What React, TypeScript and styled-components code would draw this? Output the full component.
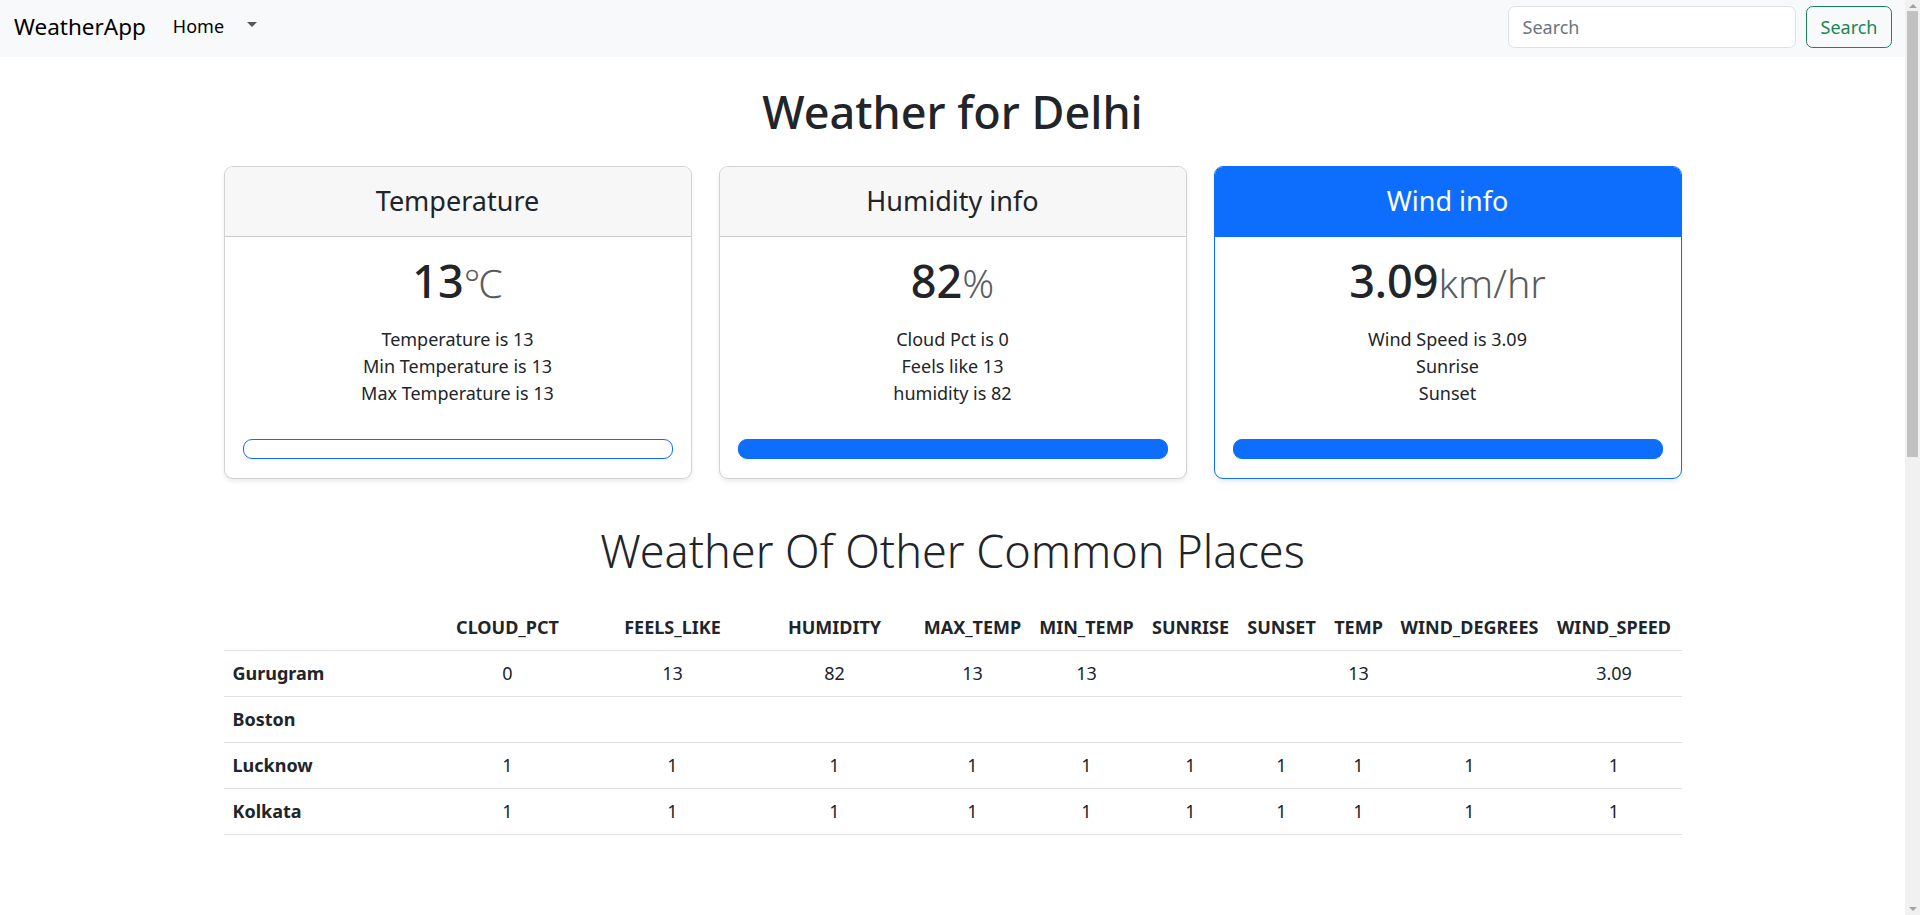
import React from "react";
import styled, { createGlobalStyle } from "styled-components";

const GlobalStyle = createGlobalStyle`
  *, *::before, *::after { box-sizing: border-box; }
  body {
    margin: 0;
    font-family: "Noto Sans", "Open Sans", sans-serif;
    font-size: 18px;
    line-height: 1.5;
    color: #212529;
    background: #fff;
  }
`;

const Page = styled.div`
  min-height: 1824px;
  padding-right: 15px;
`;

/* replica of the classic browser scrollbar visible on the right edge */
const ScrollBar = styled.div`
  position: fixed;
  top: 0;
  right: 0;
  width: 15px;
  height: 100vh;
  background: #f1f1f1;
  display: flex;
  flex-direction: column;
  align-items: center;
`;

const ScrollArrow = styled.span<{ $down?: boolean }>`
  width: 0;
  height: 0;
  margin: ${(p) => (p.$down ? "auto 0 4px" : "4px 0 0")};
  border-left: 4px solid transparent;
  border-right: 4px solid transparent;
  ${(p) =>
    p.$down ? "border-top: 4px solid #a3a3a3;" : "border-bottom: 4px solid #a3a3a3;"}
`;

const ScrollThumb = styled.span`
  width: 11px;
  height: 446px;
  margin-top: 3px;
  background: #c1c1c1;
`;

const Navbar = styled.nav`
  height: 57px;
  background: #f8f9fa;
  display: flex;
  align-items: center;
  justify-content: space-between;
  padding: 0 13px 3px 14px;
`;

const NavLeft = styled.div`
  display: flex;
  align-items: center;
`;

const Brand = styled.a`
  font-size: 22.5px;
  line-height: 1.5;
  color: #000;
  text-decoration: none;
  margin-right: 27px;
`;

const NavLink = styled.a`
  font-size: 18px;
  color: #000;
  text-decoration: none;
  margin-bottom: 2px;
`;

const Caret = styled.span`
  display: inline-block;
  margin-left: 23px;
  margin-top: -5px;
  width: 0;
  height: 0;
  border-top: 5.4px solid rgba(0, 0, 0, 0.65);
  border-left: 5.4px solid transparent;
  border-right: 5.4px solid transparent;
`;

const SearchForm = styled.form`
  display: flex;
  align-items: center;
  gap: 10px;
`;

const SearchInput = styled.input`
  width: 288px;
  height: 42.75px;
  padding: 6.75px 13.5px;
  font-family: inherit;
  font-size: 18px;
  color: #212529;
  background: #fff;
  border: 1px solid #dee2e6;
  border-radius: 6.75px;
  outline: none;
  &::placeholder { color: #6c757d; }
`;

const SearchButton = styled.button`
  height: 42.75px;
  width: 86px;
  padding: 0;
  font-family: inherit;
  font-size: 18px;
  color: #198754;
  background: transparent;
  border: 1px solid #198754;
  border-radius: 6.75px;
`;

const Main = styled.main`
  width: 1458px;
  margin: 0 auto;
`;

const PageTitle = styled.h1`
  margin: 27.5px 0 27.8px;
  font-size: 45px;
  font-weight: 500;
  line-height: 1.2;
  text-align: center;
`;

const CardGrid = styled.div`
  display: grid;
  grid-template-columns: repeat(3, 1fr);
  gap: 27px;
`;

const Card = styled.div<{ $featured?: boolean }>`
  border: 1px solid ${(p) => (p.$featured ? "#0d6efd" : "rgba(0,0,0,0.175)")};
  border-radius: 9px;
  box-shadow: 0 2.25px 4.5px rgba(0, 0, 0, 0.075);
  text-align: center;
  background: #fff;
`;

const CardHeader = styled.div<{ $featured?: boolean }>`
  padding: 18px;
  border-bottom: 1px solid ${(p) => (p.$featured ? "#0d6efd" : "rgba(0,0,0,0.175)")};
  background: ${(p) => (p.$featured ? "#0d6efd" : "#f7f7f7")};
  color: ${(p) => (p.$featured ? "#fff" : "#212529")};
  border-radius: 8px 8px 0 0;
`;

const CardTitle = styled.h4`
  margin: 0;
  font-size: 27px;
  font-weight: 400;
  line-height: 1.2;
`;

const CardBody = styled.div`
  padding: 17px 18px 19.5px;
`;

const Value = styled.h1`
  margin: 0 0 9px;
  font-size: 45px;
  font-weight: 500;
  line-height: 1.2;
`;

const Unit = styled.small`
  font-size: 0.875em;
  font-weight: 300;
  color: rgba(33, 37, 41, 0.75);
`;

const InfoList = styled.ul`
  list-style: none;
  padding: 0;
  margin: 18px 0 32px;
`;

const CardButton = styled.button<{ $filled?: boolean }>`
  display: block;
  width: 100%;
  height: 20px;
  padding: 0;
  border: 1px solid #0d6efd;
  border-radius: 9px;
  background: ${(p) => (p.$filled ? "#0d6efd" : "transparent")};
`;

const SectionTitle = styled.h2`
  margin: 44.5px 0 27px;
  font-size: 45px;
  font-weight: 300;
  line-height: 1.2;
  text-align: center;
`;

const Table = styled.table`
  width: 100%;
  table-layout: fixed;
  border-collapse: collapse;
  text-align: center;
`;

const HeadCell = styled.th`
  padding: 9px 4px;
  font-weight: 700;
  border-bottom: 1px solid #dee2e6;
  white-space: nowrap;
`;

const RowHead = styled.th`
  padding: 9px;
  font-weight: 700;
  text-align: left;
  border-bottom: 1px solid #dee2e6;
`;

const Cell = styled.td`
  padding: 9px 4px;
  border-bottom: 1px solid #dee2e6;
`;

const columns = [
  "cloud_pct",
  "feels_like",
  "humidity",
  "max_temp",
  "min_temp",
  "sunrise",
  "sunset",
  "temp",
  "wind_degrees",
  "wind_speed",
];

const colWidths = [201, 166, 164, 160, 116, 112, 96, 86, 68, 154, 135];

type Row = { name: string; values: Record<string, string> };

const ones = Object.fromEntries(columns.map((c) => [c, "1"]));

const rows: Row[] = [
  {
    name: "Gurugram",
    values: {
      cloud_pct: "0",
      feels_like: "13",
      humidity: "82",
      max_temp: "13",
      min_temp: "13",
      temp: "13",
      wind_speed: "3.09",
    },
  },
  { name: "Boston", values: {} },
  { name: "Lucknow", values: ones },
  { name: "Kolkata", values: ones },
];

const cards = [
  {
    title: "Temperature",
    value: "13",
    unit: "℃",
    lines: ["Temperature is 13", "Min Temperature is 13", "Max Temperature is 13"],
    filled: false,
    featured: false,
  },
  {
    title: "Humidity info",
    value: "82",
    unit: "%",
    lines: ["Cloud Pct is 0", "Feels like 13", "humidity is 82"],
    filled: true,
    featured: false,
  },
  {
    title: "Wind info",
    value: "3.09",
    unit: "km/hr",
    lines: ["Wind Speed is 3.09", "Sunrise", "Sunset"],
    filled: true,
    featured: true,
  },
];

export default function App() {
  return (
    <Page>
      <GlobalStyle />
      <Navbar>
        <NavLeft>
          <Brand href="#">WeatherApp</Brand>
          <NavLink href="#">Home</NavLink>
          <Caret />
        </NavLeft>
        <SearchForm onSubmit={(e) => e.preventDefault()}>
          <SearchInput type="search" placeholder="Search" />
          <SearchButton type="submit">Search</SearchButton>
        </SearchForm>
      </Navbar>
      <Main>
        <PageTitle>Weather for Delhi</PageTitle>
        <CardGrid>
          {cards.map((c) => (
            <Card key={c.title} $featured={c.featured}>
              <CardHeader $featured={c.featured}>
                <CardTitle>{c.title}</CardTitle>
              </CardHeader>
              <CardBody>
                <Value>
                  {c.value}
                  <Unit>{c.unit}</Unit>
                </Value>
                <InfoList>
                  {c.lines.map((l) => (
                    <li key={l}>{l}</li>
                  ))}
                </InfoList>
                <CardButton type="button" $filled={c.filled} />
              </CardBody>
            </Card>
          ))}
        </CardGrid>
        <SectionTitle>Weather Of Other Common Places</SectionTitle>
        <Table>
          <colgroup>
            {colWidths.map((w, i) => (
              <col key={i} style={{ width: w }} />
            ))}
          </colgroup>
          <thead>
            <tr>
              <HeadCell />
              {columns.map((c) => (
                <HeadCell key={c}>{c.toUpperCase()}</HeadCell>
              ))}
            </tr>
          </thead>
          <tbody>
            {rows.map((r) => (
              <tr key={r.name}>
                <RowHead scope="row">{r.name}</RowHead>
                {columns.map((c) => (
                  <Cell key={c}>{r.values[c] ?? ""}</Cell>
                ))}
              </tr>
            ))}
          </tbody>
        </Table>
      </Main>
      <ScrollBar aria-hidden>
        <ScrollArrow />
        <ScrollThumb />
        <ScrollArrow $down />
      </ScrollBar>
    </Page>
  );
}
